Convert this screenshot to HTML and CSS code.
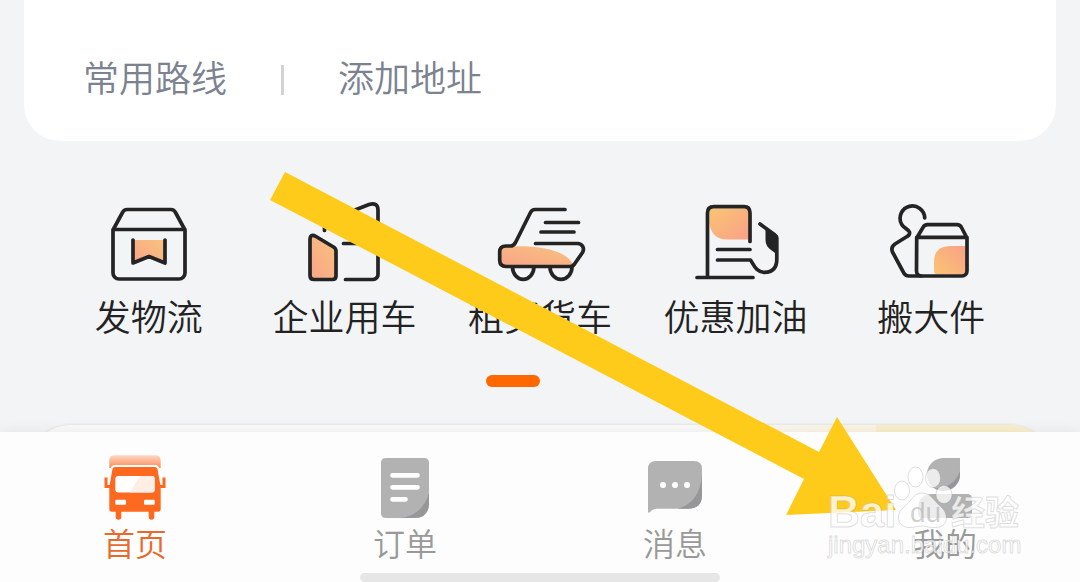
FILE: index.html
```html
<!DOCTYPE html>
<html lang="zh-CN">

<head>
    <meta charset="UTF-8">
    <meta name="viewport" content="width=device-width, initial-scale=1.0">
    <title>首页</title>
    <link rel="stylesheet" href="styles.css">
</head>

<body>

    <div class="app">
        <main class="content">
            <section class="route-card">
                <a href="#" class="route-link">常用路线</a>
                <span class="divider"></span>
                <a href="#" class="route-link">添加地址</a>
            </section>

            <section class="services">
                <a href="#" class="service">
                    <svg class="service-icon" viewBox="0 0 96 96">
                        <defs>
                            <linearGradient id="peach" x1="1" y1="0" x2="0" y2="1">
                                <stop offset="0" stop-color="#f9c37e" />
                                <stop offset="1" stop-color="#f8a488" />
                            </linearGradient>
                            <linearGradient id="peachDown" x1="0" y1="0" x2="1" y2="1">
                                <stop offset="0" stop-color="#fbc472" />
                                <stop offset="1" stop-color="#f8a188" />
                            </linearGradient>
                            <linearGradient id="peachUp" x1="0" y1="1" x2="1" y2="0">
                                <stop offset="0" stop-color="#fbc472" />
                                <stop offset="1" stop-color="#f8a188" />
                            </linearGradient>
                        </defs>
                        <path class="peach" d="M32 44H64V67L48 60.500L32 67Z" />
                        <path d="M12 34L21.500 16.500Q23 13.500 26 13.500H70Q73 13.500 74.500 16.500L84 34V77a6 6 0 0 1-6 6H18a6 6 0 0 1-6-6ZM12 33.500H84" />
                        <path d="M32 44V67L48 60.500L64 67V44" />
                    </svg>
                    <span>发物流</span>
                </a>
                <a href="#" class="service">
                    <svg class="service-icon" viewBox="0 0 96 96">
                        <path d="M28.500 34.500V28Q28.500 26 31 25L73 8.500Q82 6 82 14V78a5 5 0 0 1-5 5.500H49.500M47.500 47.500H66" />
                        <path class="peach outlined" d="M14 44Q14 37 20 40.500L37.500 51Q40 52.500 40 55V80Q40 83.500 36.500 83.500H18Q14 83.500 14 79.500Z" />
                    </svg>
                    <span>企业用车</span>
                </a>
                <a href="#" class="service">
                    <svg class="service-icon" viewBox="0 0 96 96">
                        <path class="peach" d="M9 54Q10 50 16 50.500C42 49 73 52 81.500 69H13Q9 69 9 64Z" />
                        <path d="M73 13.500H43Q40 13.500 38.500 16.500L23.500 46.500Q21.500 50 18.500 50H14Q7.700 50 7.700 56V64Q7.700 70.500 14 70.500H78Q81 70.500 82.500 68L90.500 56.500C93 52 90 47.500 85.500 47.500H43.500M53.500 26.500H86.500M49 36H82" />
                        <path d="M20.500 71a10.700 12.300 0 0 0 21.400 0M58 71a11 12.300 0 0 0 22 0" />
                    </svg>
                    <span>租买货车</span>
                </a>
                <a href="#" class="service">
                    <svg class="service-icon" viewBox="0 0 96 96">
                        <path class="peach-down" d="M21.500 12.500H60.500V43.500H39Q24 43.500 21.500 28Z" />
                        <path d="M19.500 81V17Q19.500 10.700 26 10.700H56Q62 10.700 62 17V45.500M9 81.500H65M29.500 53.500H62M29.500 64H62.500C66 69 68 76.300 76.500 76.300Q88.800 76.300 88.800 63V42Q88.800 40 87 39L72 28" />
                        <path class="solid" d="M77.500 33L88.500 40V58L83 54Q77.500 50 77.500 44Z" />
                    </svg>
                    <span>优惠加油</span>
                </a>
                <a href="#" class="service">
                    <svg class="service-icon" viewBox="0 0 96 96">
                        <path class="peach-up" d="M51 66Q51 50 67 50H82.500V78.500H54Q51 78.500 51 74Z" />
                        <path d="M41.700 22A12.300 12.300 0 1 0 18.500 28C20 32 25.500 33 26.500 36Q27 39 24 40.500L12 48Q7.500 51 9.500 56L20 75.500Q22 80 26 80H38" />
                        <path d="M33.700 42L40 31.500Q41.500 28.700 44.500 28.700H74Q77 28.700 78.500 31.500L84 42V75a5 5 0 0 1-5 5H38.500a5 5 0 0 1-5-5ZM33.700 41.300H84" />
                    </svg>
                    <span>搬大件</span>
                </a>
            </section>

            <div class="pager"><span class="pager-thumb"></span></div>

            <section class="promo-card">
                <div class="promo-highlight"></div>
            </section>
        </main>

        <nav class="tab-bar">
            <a href="#" class="tab active">
                <svg class="tab-icon" viewBox="0 0 72 72">
                    <defs>
                        <linearGradient id="roof" x1="0" y1="0" x2="0" y2="1">
                            <stop offset="0" stop-color="#fdd8c6" />
                            <stop offset="1" stop-color="#fc8a52" />
                        </linearGradient>
                    </defs>
                    <path fill="url(#roof)" d="M10.300 16V8.500Q10.300 3.300 15.500 3.300H56.500Q61.700 3.300 61.700 8.500V16Z" />
                    <path fill="#fd691f" stroke="#fdfdfd" stroke-width="4" paint-order="stroke" d="M13.300 18Q13.500 15 16.500 15H55.500Q58.500 15 58.700 18L61.700 35V57Q61.700 59.700 59 59.700H13Q10.300 59.700 10.300 57V35Z" />
                    <path fill="#fd691f" d="M16.700 58H22.300V65a2.800 2.800 0 0 1-5.600 0ZM49.700 58H55.300V65a2.800 2.800 0 0 1-5.600 0Z" />
                    <path fill="none" stroke="#fd691f" stroke-width="3" d="M11 34.500H7V25.500M61 34.500H65V25.500" />
                    <rect x="16.300" y="24" width="39.400" height="16.500" rx="3" fill="#fff" />
                    <path fill="#ffede6" d="M41 24H53Q55.700 24 55.700 27V37.500Q55.700 40.500 53 40.500H31Z" />
                    <rect x="16.300" y="47.700" width="10.700" height="5" rx="1" fill="#fff" />
                    <rect x="45" y="47.700" width="10.700" height="5" rx="1" fill="#fff" />
                </svg>
                <span>首页</span>
            </a>
            <a href="#" class="tab">
                <svg class="tab-icon" viewBox="0 0 72 72">
                    <path fill="#b2b2b2" d="M17 6H55Q60 6 60 11V51Q60 66 45 66H17Q12 66 12 61V11Q12 6 17 6Z" />
                    <path fill="#97979a" d="M60 41V51Q60 66 45 66H31Q53 64 60 41Z" />
                    <path stroke="#fff" stroke-width="4.700" stroke-linecap="round" d="M23.500 23.300H48.500M23.500 35.300H48.500M23.500 47.300H36.500" />
                </svg>
                <span>订单</span>
            </a>
            <a href="#" class="tab">
                <svg class="tab-icon" viewBox="0 0 72 72">
                    <path fill="#b2b2b2" d="M17 9H55Q63 9 63 17V43Q63 56.700 49 56.700H18Q14 56.700 11 60Q9 62 9 59V17Q9 9 17 9Z" />
                    <path fill="#97979a" d="M63 23V43Q63 56.700 49 56.700H39Q61 50 63 23Z" />
                    <g fill="#fff">
                        <circle cx="24" cy="33" r="3" />
                        <circle cx="36" cy="33" r="3" />
                        <circle cx="48" cy="33" r="3" />
                    </g>
                </svg>
                <span>消息</span>
            </a>
            <a href="#" class="tab">
                <svg class="tab-icon" viewBox="0 0 72 72">
                    <path fill="#b2b2b2" d="M51 6V22A16.600 16.600 0 1 1 34 6Z" />
                    <path fill="#97979a" d="M51 19V22A16.600 16.600 0 0 1 26 36.500Q45 36 51 19Z" />
                    <path fill="#b2b2b2" d="M24 42H58Q63 42 63 47V61Q63 66 58 66H14Q9 66 9 61V57Q9 42 24 42Z" />
                </svg>
                <span>我的</span>
            </a>
            <span class="home-indicator"></span>
        </nav>

        <!-- pointer and watermark drawn over the screen -->
        <svg class="overlay" viewBox="0 0 1080 582">
            <path fill="#ffcb1b" d="M285 172L819 452L837 417L896 510L786 515L804 479L270 200Z" />
            <g class="watermark">
                <text class="mark-name" x="828" y="527">Bai</text>
                <ellipse cx="915.500" cy="477" rx="7.500" ry="10" />
                <ellipse cx="933" cy="478" rx="7.500" ry="9.500" />
                <ellipse cx="902" cy="490.500" rx="7.500" ry="9.500" />
                <ellipse cx="944" cy="494.500" rx="8" ry="9" />
                <path d="M922 493C931 493 934 501 940 506C949 513 949 527 936 527.500C929 528 926 526 922 526C917 526 914 528 908 527.500C896 526 896 513 904 507C911 502 913 493 922 493Z" />
                <text class="mark-paw" x="910" y="522">du</text>
                <text class="mark-cjk" x="951" y="525">经验</text>
                <text class="mark-url" x="828" y="553">jingyan.baidu.com</text>
            </g>
        </svg>
    </div>

</body>

</html>
```

FILE: styles.css
```css
* {
    box-sizing: border-box;
}

body {
    margin: 0;
    font-family: "Liberation Sans", "Noto Sans CJK SC", sans-serif;
    font-weight: 350;
    background-color: #f3f4f6;
    color: #222;
}

a {
    color: inherit;
    text-decoration: none;
}

.app {
    position: relative;
    display: flex;
    flex-direction: column;
    height: 100vh;
    overflow: hidden;
}

.content {
    flex: 1;
    min-height: 0;
    overflow: hidden;
    padding: 0 24px;
}

/* Address card */
.route-card {
    display: flex;
    align-items: center;
    gap: 54px;
    padding: 58px 59px 39px;
    background: #fff;
    border-radius: 0 0 36px 36px;
}

.route-link {
    font-size: 36px;
    line-height: 44px;
    color: #7b8290;
}

.divider {
    width: 3px;
    height: 30px;
    background: #d3d3d3;
}

/* Service grid */
.services {
    display: grid;
    grid-template-columns: repeat(5, 1fr);
    padding: 55px 27px 0;
}

.service {
    display: flex;
    flex-direction: column;
    align-items: center;
    gap: 5px;
    font-size: 36px;
    line-height: 44px;
    white-space: nowrap;
}

.service-icon {
    width: 96px;
    height: 96px;
    fill: none;
    stroke: #242424;
    stroke-width: 3.7;
    stroke-linecap: round;
    stroke-linejoin: round;
}

.service-icon .peach {
    fill: url(#peach);
    stroke: none;
}

.service-icon .peach-down {
    fill: url(#peachDown);
    stroke: none;
}

.service-icon .peach-up {
    fill: url(#peachUp);
    stroke: none;
}

.service-icon .outlined {
    stroke: #242424;
}

.service-icon .solid {
    fill: #242424;
    stroke: none;
}

/* Pager under the grid */
.pager {
    width: 108px;
    height: 12px;
    margin: 34px auto 38px;
}

.pager-thumb {
    display: block;
    width: 50%;
    height: 100%;
    border-radius: 6px;
    background: #ff6700;
}

.promo-card {
    display: flex;
    justify-content: flex-end;
    height: 120px;
    border-radius: 48px;
    overflow: hidden;
    background: linear-gradient(90deg, #fafafa 65%, #fbf4e3 80%);
    box-shadow: 0 0 3px rgba(0, 0, 0, 0.12);
}

.promo-highlight {
    width: 180px;
    background: #faefcb;
}

/* Bottom tabs */
.tab-bar {
    position: relative;
    display: grid;
    grid-template-columns: repeat(4, 1fr);
    padding-top: 20px;
    background: #fdfdfd;
    box-shadow: 0 0 14px rgba(0, 0, 0, 0.07);
}

.tab {
    display: flex;
    flex-direction: column;
    align-items: center;
    font-size: 32px;
    line-height: 42px;
    color: #999;
}

.tab.active {
    color: #e8692c;
}

.tab-icon {
    width: 72px;
    height: 72px;
}

.home-indicator {
    grid-column: 1 / -1;
    justify-self: center;
    width: 33.333%;
    height: 9px;
    margin-top: 7px;
    border-radius: 5px;
    background: #e6e6e6;
}

/* Overlay */
.overlay {
    position: absolute;
    inset: 0;
    width: 100%;
    height: 100%;
    pointer-events: none;
}

.watermark {
    fill: rgba(255, 255, 255, 0.75);
    stroke: rgba(140, 140, 140, 0.28);
    stroke-width: 1;
}

.mark-name {
    font-size: 44px;
    font-weight: bold;
}

.mark-paw {
    font-size: 28px;
    font-weight: normal;
    fill: rgba(150, 150, 150, 0.45);
    stroke: none;
}

.mark-cjk {
    font-size: 34px;
    font-weight: bold;
}

.mark-url {
    font-size: 24px;
    font-weight: normal;
}
```
